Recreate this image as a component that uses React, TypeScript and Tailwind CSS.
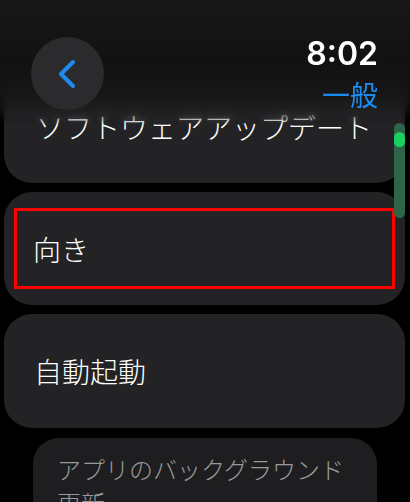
import React from "react";

const jp = "font-['Noto_Sans_CJK_JP','Noto_Sans',sans-serif]";

function BackButton() {
  return (
    <div className="flex h-[73px] w-[73px] items-center justify-center rounded-full bg-[#2b2b2d]">
      <svg width="24" height="34" viewBox="0 0 24 34" fill="none">
        <path d="M17 5L5 17l12 12" stroke="#1d8cf2" strokeWidth="4" strokeLinecap="round" strokeLinejoin="round" />
      </svg>
    </div>
  );
}

export default function App() {
  return (
    <div className="relative h-[502px] w-[410px] overflow-hidden bg-black">
      {/* List */}
      <div className="flex flex-col gap-[9px] pl-[4px] pr-[5px] pt-[70px]">
        <div className="flex h-[113px] items-center rounded-[28px] bg-[#232325] pl-[32px] pr-[20px]">
          <span className={`${jp} text-[28px] font-light text-white`}>ソフトウェアアップデート</span>
        </div>

        <div className="flex h-[113px] items-center rounded-[28px] bg-[#232325] px-[10px]">
          <div className="flex h-[81px] w-full items-center border-[3px] border-[#ff0000] px-[16px]">
            <span className={`${jp} text-[28px] font-light text-white`}>向き</span>
          </div>
        </div>

        <div className="flex h-[114px] items-center rounded-[28px] bg-[#232325] px-[30px]">
          <span className={`${jp} text-[28px] font-light text-white`}>自動起動</span>
        </div>

        <div className="ml-[29px] mr-[28px] mt-[1px] h-[120px] rounded-[26px] bg-[#1e1e20] px-[24px] pt-[14px]">
          <p className={`${jp} text-[24px] font-light leading-[34px] text-[#9a9a9c]`}>アプリのバックグラウンド更新</p>
        </div>
      </div>

      {/* Header overlay */}
      <div className="absolute inset-x-0 top-0 h-[126px] bg-[linear-gradient(to_bottom,#171717_0%,#121212_50%,rgba(22,22,22,0.92)_75%,rgba(30,30,32,0.4)_90%,rgba(30,30,32,0)_100%)] backdrop-blur-[3px] [mask-image:linear-gradient(to_bottom,black_85%,transparent_100%)]" />

      <div className="absolute left-[31px] top-[37px]">
        <BackButton />
      </div>

      <div className="absolute right-[32px] top-[34px] flex flex-col items-end">
        <span className="font-['Inter',sans-serif] text-[32px] font-semibold leading-[40px] text-white">8:02</span>
        <span className={`${jp} mt-[2px] text-[28px] leading-[36px] text-[#1d8cf2]`}>一般</span>
      </div>

      {/* Scroll indicator */}
      <div className="absolute left-[394px] top-[123px] h-[95px] w-[11px] rounded-full bg-[#2e6549]">
        <div className="mt-[9px] h-[15px] w-[11px] rounded-full bg-[#1ccf5e]" />
      </div>
    </div>
  );
}
